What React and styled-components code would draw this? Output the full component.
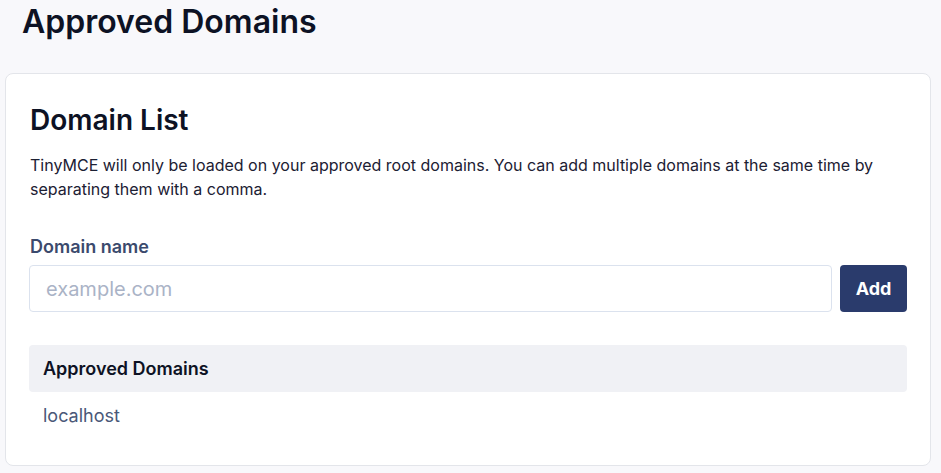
import React from 'react';
import styled, { createGlobalStyle } from 'styled-components';

const GlobalStyle = createGlobalStyle`
  body {
    margin: 0;
    background: #f8f8fb;
    font-family: Inter, "Noto Sans", sans-serif;
    color: #1c2033;
  }
  * {
    box-sizing: border-box;
  }
`;

const Page = styled.div`
  padding: 0 10px 8px 5px;
`;

const PageTitle = styled.h1`
  margin: 0;
  padding: 2px 0 0 17px;
  height: 73px;
  font-size: 32px;
  line-height: 40px;
  font-weight: 600;
  color: #0d1224;
`;

const Card = styled.section`
  background: #fff;
  border: 1px solid #e3e5ea;
  border-radius: 8px;
  padding: 29px 23px 27px;
`;

const CardTitle = styled.h2`
  margin: 0 0 16px 1px;
  font-size: 28px;
  line-height: 34px;
  font-weight: 600;
  color: #0d1224;
`;

const Intro = styled.p`
  margin: 0 0 35px 1px;
  font-size: 16px;
  line-height: 24px;
  color: #1c2033;
`;

const Label = styled.label`
  display: block;
  margin: 0 0 7px 1px;
  font-size: 18px;
  line-height: 22px;
  font-weight: 600;
  color: #3b4a6d;
`;

const FormRow = styled.div`
  display: flex;
  gap: 8px;
  margin-bottom: 33px;
`;

const Input = styled.input`
  flex: 1;
  height: 47px;
  border: 1px solid #dbe2ee;
  border-radius: 4px;
  padding: 0 16px;
  font-family: inherit;
  font-size: 20px;
  color: #1c2033;
  outline: none;

  &::placeholder {
    color: #aab3c6;
  }
`;

const Button = styled.button`
  width: 67px;
  height: 47px;
  border: none;
  border-radius: 4px;
  background: #2a3b6c;
  color: #fff;
  font-family: inherit;
  font-size: 18px;
  font-weight: 700;
  cursor: pointer;
`;

const Table = styled.table`
  width: 100%;
  border-collapse: collapse;
`;

const HeadCell = styled.th`
  height: 47px;
  padding: 0 14px;
  background: #f0f1f5;
  text-align: left;
  font-size: 18px;
  font-weight: 600;
  color: #0d1224;

  &:first-child {
    border-radius: 4px;
  }
`;

const Cell = styled.td`
  height: 46px;
  padding: 0 14px;
  font-size: 18px;
  color: #4a5878;
`;

const domains = ['localhost'];

const App = () => {
  return (
    <Page>
      <GlobalStyle />
      <PageTitle>Approved Domains</PageTitle>
      <Card>
        <CardTitle>Domain List</CardTitle>
        <Intro>
          TinyMCE will only be loaded on your approved root domains. You can add
          multiple domains at the same time by separating them with a comma.
        </Intro>
        <Label htmlFor="domain">Domain name</Label>
        <FormRow>
          <Input id="domain" placeholder="example.com" />
          <Button>Add</Button>
        </FormRow>
        <Table>
          <thead>
            <tr>
              <HeadCell>Approved Domains</HeadCell>
            </tr>
          </thead>
          <tbody>
            {domains.map((d) => (
              <tr key={d}>
                <Cell>{d}</Cell>
              </tr>
            ))}
          </tbody>
        </Table>
      </Card>
    </Page>
  );
};

export default App;
